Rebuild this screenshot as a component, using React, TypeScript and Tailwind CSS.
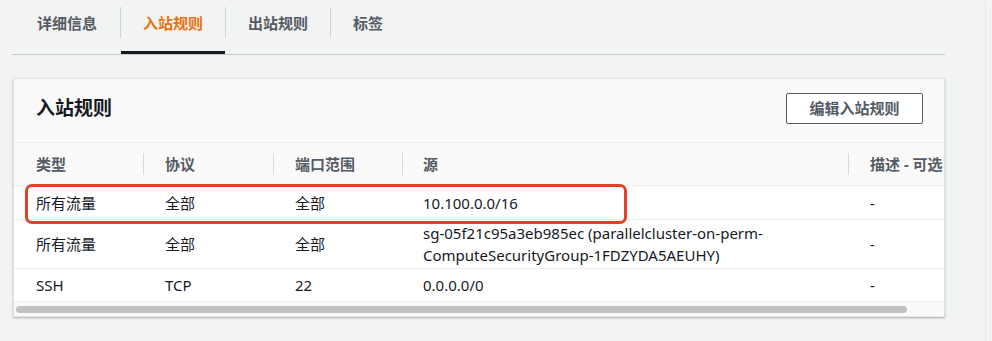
import React from "react";

const tabs = ["详细信息", "入站规则", "出站规则", "标签"];

const rows = [
  { type: "所有流量", proto: "全部", port: "全部", src: ["10.100.0.0/16"], h: "h-[34px]" },
  {
    type: "所有流量",
    proto: "全部",
    port: "全部",
    src: ["sg-05f21c95a3eb985ec (parallelcluster-on-perm-", "ComputeSecurityGroup-1FDZYDA5AEUHY)"],
    h: "h-[49px]",
  },
  { type: "SSH", proto: "TCP", port: "22", src: ["0.0.0.0/0"], h: "h-[33px]" },
];

const font = "font-['Noto_Sans','Noto_Sans_CJK_SC',sans-serif]";

function Sep() {
  return <div className="w-px bg-[#d5dbdb] self-stretch my-[10px]" />;
}

export default function App() {
  return (
    <div className={`w-[992px] h-[341px] bg-[#f2f3f3] overflow-hidden ${font}`}>
      <div className="w-[986px] h-[341px] border-r border-[#e4e6e6] rounded-tr-[6px]">
        {/* tabs */}
        <div className="ml-[12px] w-[933px] h-[55px] border-b border-[#c6c9c9] flex">
          {tabs.map((t, i) => (
            <React.Fragment key={t}>
              {i > 0 && <div className="w-px h-[31px] mt-[7px] bg-[#d0d4d4]" />}
              <div
                className={`h-[54px] pt-[12px] text-[15px] leading-[22px] font-bold ${
                  i === 0 ? "pl-[25px] pr-[23px]" : "px-[22px]"
                } ${i === 1 ? "text-[#ec7211] border-b-[3px] border-[#16191f]" : "text-[#545b64]"}`}
              >
                {t}
              </div>
            </React.Fragment>
          ))}
        </div>

        {/* panel */}
        <div className="relative ml-[13px] mt-[23px] w-[932px] h-[239px] bg-white border border-[#e1e4e4] shadow-[0_1px_2px_rgba(0,28,36,0.3)] overflow-hidden">
          <div className="h-[64px] bg-[#fafafa] border-b border-[#eaeded] flex items-center justify-between pl-[22px] pr-[21px]">
            <div className="text-[19px] font-bold text-[#16191f] -mt-[4px]">入站规则</div>
            <button className="w-[137px] h-[31px] -mt-[4px] border border-[#545b64] rounded-[2px] bg-white text-[15px] font-bold text-[#545b64]">
              编辑入站规则
            </button>
          </div>

          <div className="w-[1040px] text-[15px] text-[#16191f]">
            <div className="flex h-[43px] bg-[#fafafa] border-b border-[#eaeded] font-bold text-[#545b64]">
              <div className="w-[129px] pl-[22px] flex items-center">类型</div>
              <Sep />
              <div className="w-[129px] pl-[21px] flex items-center">协议</div>
              <Sep />
              <div className="w-[128px] pl-[21px] flex items-center">端口范围</div>
              <Sep />
              <div className="w-[445px] pl-[20px] flex items-center">源</div>
              <Sep />
              <div className="flex-1 pl-[21px] flex items-center">描述 - 可选</div>
            </div>
            {rows.map((r, i) => (
              <div key={i} className={`flex ${r.h} border-b border-[#eaeded] items-center leading-[22px]`}>
                <div className="w-[130px] pl-[22px]">{r.type}</div>
                <div className="w-[130px] pl-[21px]">{r.proto}</div>
                <div className="w-[129px] pl-[21px]">{r.port}</div>
                <div className="w-[446px] pl-[20px]">
                  {r.src.map((s) => (
                    <div key={s}>{s}</div>
                  ))}
                </div>
                <div className="flex-1 pl-[21px]">-</div>
              </div>
            ))}
          </div>

          {/* scrollbar */}
          <div className="h-[16px] bg-[#fafafa] pt-[4px] pl-[2px]">
            <div className="w-[891px] h-[7px] rounded-full bg-[#c1c1c1]" />
          </div>

          {/* highlight box */}
          <div className="absolute left-[11px] top-[105px] w-[602px] h-[40px] border-[3px] border-[#e3402a] rounded-[7px]" />
        </div>
      </div>
    </div>
  );
}
